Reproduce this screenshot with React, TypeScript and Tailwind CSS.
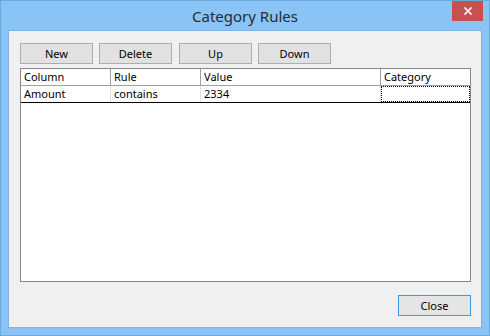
import { X } from 'lucide-react';

const font = { fontFamily: '"Noto Sans", "Liberation Sans", sans-serif' };

const ToolButton = ({ label, className = '' }: { label: string; className?: string }) => (
  <button
    className={`w-[73px] h-[21px] border border-[#adadad] bg-[#e1e1e1] text-[11px] text-black leading-none flex items-center justify-center ${className}`}
  >
    {label}
  </button>
);

const columns = [
  { name: 'Column', w: 'w-[90px]' },
  { name: 'Rule', w: 'w-[90px]' },
  { name: 'Value', w: 'w-[180px]' },
  { name: 'Category', w: 'flex-1' },
];

const row = ['Amount', 'contains', '2334', ''];

const App = () => {
  return (
    <div className="w-[490px] h-[336px] bg-[#8ac3f6] border border-[#6aa8e0] flex flex-col" style={font}>
      {/* title bar */}
      <div className="relative h-[29px] flex items-center justify-center">
        <span className="text-[15px] text-[#2a2a2a] mt-[1px]">Category Rules</span>
        <div className="absolute right-[6px] top-0 w-[31px] h-[20px] bg-[#c75050] flex items-center justify-center">
          <X className="w-[12px] h-[12px] text-white" strokeWidth={3.5} />
        </div>
      </div>

      {/* client area */}
      <div className="mx-[7px] mb-[7px] flex-1 bg-[#f0f0f0] border border-[#7eb4e6] flex flex-col pt-[12px] pl-[11px] pr-[10px] pb-[11px]">
        <div className="flex">
          <ToolButton label="New" />
          <ToolButton label="Delete" className="ml-[6px]" />
          <ToolButton label="Up" className="ml-[7px]" />
          <ToolButton label="Down" className="ml-[6px]" />
        </div>

        <div className="mt-[4px] h-[214px] bg-white border border-[#828790] flex flex-col text-[11px] text-black">
          <div className="flex h-[17px] border-b border-[#a0a0a0]">
            {columns.map((c, i) => (
              <div
                key={c.name}
                className={`${c.w} px-[3px] flex items-center ${i < 3 ? 'border-r border-[#a0a0a0]' : ''}`}
              >
                {c.name}
              </div>
            ))}
          </div>
          <div className="flex h-[17px] border-b border-black">
            {row.map((v, i) => (
              <div
                key={i}
                className={`${columns[i].w} px-[3px] flex items-center ${
                  i < 3 ? 'border-r border-[#e0e0e0]' : 'border border-dotted border-black'
                }`}
              >
                {v}
              </div>
            ))}
          </div>
        </div>

        <div className="mt-auto flex justify-end">
          <button className="w-[73px] h-[21px] border border-[#3c99ef] bg-[#e5e5e5] text-[11px] text-black leading-none flex items-center justify-center">
            Close
          </button>
        </div>
      </div>
    </div>
  );
};

export default App;
